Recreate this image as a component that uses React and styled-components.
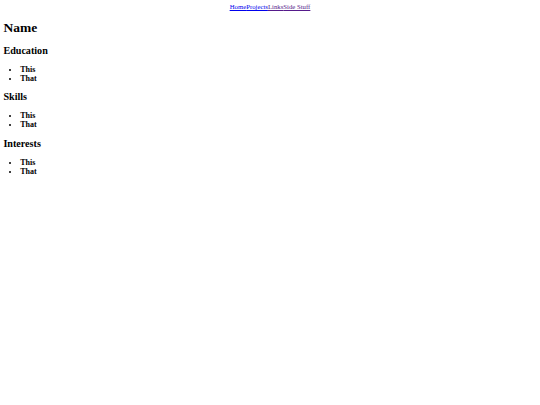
import React from 'react';
import styled, { createGlobalStyle } from 'styled-components';

const GlobalStyle = createGlobalStyle`
  body {
    margin: 3.4px;
    font-family: "Liberation Serif", "Times New Roman", serif;
    font-size: 6.75px;
    color: #000;
    background: #fff;
  }
`;

const Nav = styled.nav`
  display: flex;
  justify-content: center;
  line-height: 1.15;
`;

const NavLink = styled.a`
  color: ${(p) => (p.$visited ? '#551a8b' : '#0000ee')};
  text-decoration: underline;
  cursor: pointer;
`;

const Title = styled.h1`
  font-size: 13.5px;
  line-height: 1.15;
  margin: 9.05px 0;
`;

const SectionTitle = styled.h2`
  font-size: 10.125px;
  line-height: 1.15;
  margin: 8.4px 0;
`;

const List = styled.ul`
  margin: 6.75px 0;
  padding-left: 16.9px;
`;

const Item = styled.li`
  font-size: 8px;
  font-weight: bold;
  line-height: 9px;
`;

const links = [
  { label: 'Home', visited: false },
  { label: 'Projects', visited: false },
  { label: 'Links', visited: true },
  { label: 'Side Stuff', visited: true },
];

const sections = ['Education', 'Skills', 'Interests'];

export default function App() {
  return (
    <>
      <GlobalStyle />
      <Nav>
        {links.map((l) => (
          <NavLink key={l.label} $visited={l.visited}>
            {l.label}
          </NavLink>
        ))}
      </Nav>
      <Title>Name</Title>
      {sections.map((s) => (
        <section key={s}>
          <SectionTitle>{s}</SectionTitle>
          <List>
            <Item>This</Item>
            <Item>That</Item>
          </List>
        </section>
      ))}
    </>
  );
}
